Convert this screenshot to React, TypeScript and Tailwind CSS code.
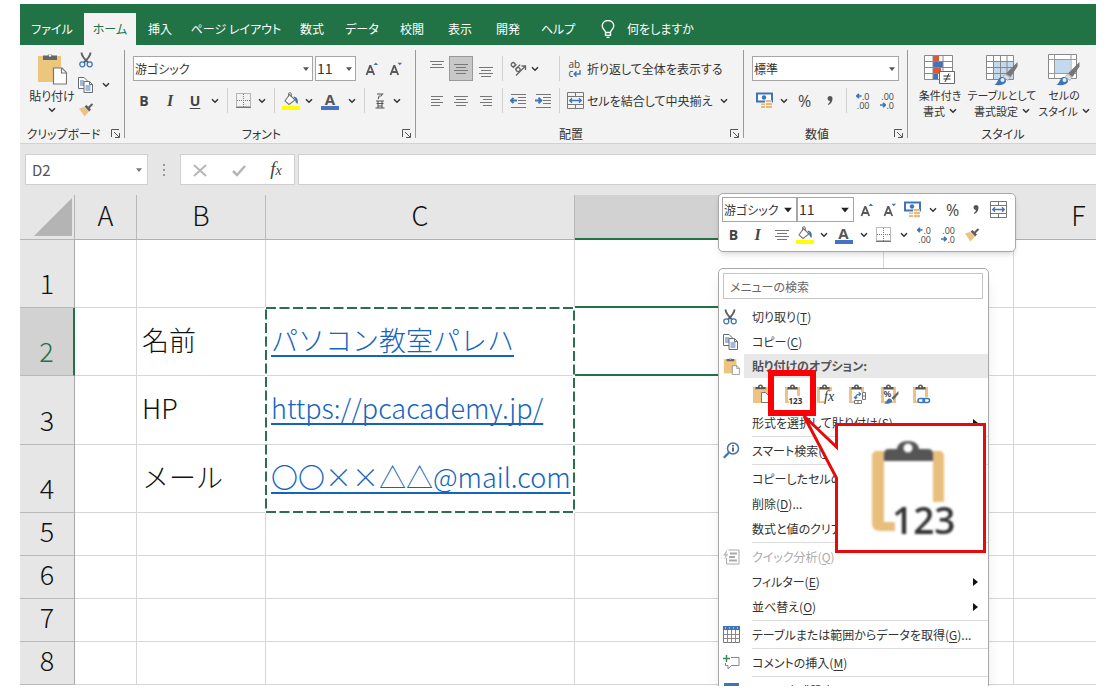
import type { ReactNode } from "react";
import clsx from "clsx";

/* ---------- icons ---------- */

function Chevron({ className }: { className?: string }) {
  return (
    <svg viewBox="0 0 8 6" className={clsx("h-1.5 w-2 shrink-0", className)} fill="none" stroke="#333" strokeWidth="1.5">
      <path d="M1 1.2 4 4.2 7 1.2" />
    </svg>
  );
}

function Triangle({ className }: { className?: string }) {
  return (
    <svg viewBox="0 0 8 5" className={clsx("pointer-events-none absolute top-1/2 -translate-y-1/2", className)}>
      <path d="M0 0h8L4 5z" fill="currentColor" />
    </svg>
  );
}

function ScissorsIcon() {
  return (
    <svg viewBox="0 0 14 16" className="h-4 w-3.5" fill="none">
      <path d="M2.5.5c0 3 1.800 5.500 6.500 10M11.500.5c0 3-1.800 5.500-6.500 10" stroke="#5f5f5f" strokeWidth="1.900" />
      <circle cx="3.300" cy="12.300" r="2.500" stroke="#3f74b5" strokeWidth="1.300" />
      <circle cx="10.700" cy="12.300" r="2.500" stroke="#3f74b5" strokeWidth="1.300" />
    </svg>
  );
}

function CopyIcon() {
  return (
    <svg viewBox="0 0 16 16" className="h-4 w-4" fill="#fff" stroke="#6a6a6a">
      <path d="M.5.5h5.500l3 3v8h-8.500z" />
      <path d="M2 4h4M2 6h5M2 8h5" stroke="#3f74b5" />
      <path d="M6 4.500h5.500l3 3v8H6z" />
      <path d="M11.500 4.500v3h3" fill="none" />
      <path d="M7.500 9h5M7.500 11h5M7.500 13h5" stroke="#3f74b5" />
    </svg>
  );
}

function BrushIcon() {
  return (
    <svg viewBox="0 0 16 15" className="h-[15px] w-4">
      <path d="M1 6.500 6 5l5 4.500-4.500 5z" fill="#ecc285" />
      <path d="m6.500 4.500 2-1.500L13 7.500l-1.800 2z" fill="#5c5c5c" />
      <path d="M10 5 13.800 1.200 15.200 2.600 11.500 6.500z" fill="#5c5c5c" />
    </svg>
  );
}

function PasteIcon({ className }: { className?: string }) {
  return (
    <svg viewBox="0 0 30 33" className={className}>
      <path d="M1 4h23v26H1z" fill="#ecc67d" />
      <path d="M6 8V3.500h4.500a3 3 0 0 1 5 0H20V8z" fill="#666" />
      <circle cx="13" cy="3.500" r="1.300" fill="#f3f3f3" />
      <path d="M16.500 16h8.500l4.500 4.500V32h-13z" fill="#fff" stroke="#777" strokeWidth="1.200" />
      <path d="M24.500 16v5h5" fill="none" stroke="#777" strokeWidth="1.200" />
    </svg>
  );
}

function FontSizeIcon({ up }: { up?: boolean }) {
  return (
    <svg viewBox="0 0 14 14" className="h-3.5 w-3.5" fill="none">
      <path d="M1.500 13 5 4h.6L9.200 13M2.800 10h5" stroke="#5a5a5a" strokeWidth="1.800" />
      <path d={up ? "M8.500 3h4.600L10.800.5z" : "M8.500.8h4.600l-2.300 2.500z"} fill="#3f74b5" />
    </svg>
  );
}

function BordersIcon() {
  return (
    <svg viewBox="0 0 15 15" className="h-[15px] w-[15px]" fill="none" stroke="#777">
      <path d="M.5.5h14v13H.5zM7.500 1v13M1 7.500h13" strokeDasharray="1 1" />
      <path d="M0 14.500h15" stroke="#777" />
    </svg>
  );
}

function FillIcon() {
  return (
    <svg viewBox="0 0 18 18" className="h-[18px] w-[18px]" fill="none">
      <path d="M7.500 2.500 13 8l-6 4.500L3 9z" fill="#fff" stroke="#777" strokeWidth="1.100" />
      <path d="M6.500 5V2a1.400 1.400 0 0 1 2.800 0v3" stroke="#777" />
      <path d="M11.500 4.500c4 .5 5 3.500 4 7.500-1.500-1-2.500-3-2.300-4.500z" fill="#3f74b5" />
      <path d="M0 14h18v4H0z" fill="#ffff00" />
    </svg>
  );
}

function FontColorIcon() {
  return (
    <span className="flex w-[18px] flex-col items-center">
      <span className="h-3.5 font-['Open_Sans',sans-serif] text-[15px] leading-[14px] font-bold text-[#555]">A</span>
      <span className="h-1 w-full bg-[#4472c4]" />
    </span>
  );
}

function PhoneticIcon() {
  return (
    <svg viewBox="0 0 14 16" className="h-4 w-3.5" fill="none" stroke="#555" strokeWidth="1.100">
      <path d="M4 1h5.500L7.500 3.500M6.500 2.500 5 6M3 8h8M5 8v2.500H3.500M9 8v2.500h1.500M5 10.500h4M5 13h4M5 10.500V15M9 10.500V15M2.500 15h9" />
    </svg>
  );
}

// Four text lines; `lines` holds [start, end] of every one
function LinesIcon({ lines, top = 0 }: { lines: number[][]; top?: number }) {
  return (
    <svg viewBox="0 0 16 18" className="h-[18px] w-4" stroke="#777">
      {lines.map(([from, to], i) => (
        <path key={i} d={`M${from} ${top + 0.5 + i * 3}H${to}`} />
      ))}
    </svg>
  );
}

function IndentIcon({ right }: { right?: boolean }) {
  return (
    <svg viewBox="0 0 16 16" className="h-4 w-4" fill="none" stroke="#777">
      <path d="M1 1.500h15M8 4.500h8M8 7.500h8M8 10.500h8M1 14.500h15" />
      <path
        d={right ? "M0 7.500h6M3.500 4.800l2.800 2.700-2.800 2.700" : "M7 7.500H1M3.500 4.800.8 7.500l2.700 2.700"}
        stroke="#3f74b5"
        strokeWidth="1.900"
      />
    </svg>
  );
}

function OrientationIcon() {
  return (
    <svg viewBox="0 0 17 17" className="h-[17px] w-[17px]" fill="none" stroke="#666" strokeWidth="1.300">
      <g transform="rotate(45 6 6)">
        <circle cx="3" cy="7" r="2" />
        <path d="M5.200 4.500v5M8 2v7" />
        <circle cx="10" cy="7" r="2" />
      </g>
      <path d="M6 15.500 15.500 6M11.500 6h4v4" />
    </svg>
  );
}

function WrapIcon() {
  return (
    <span className="flex w-[13px] flex-col font-['Open_Sans',sans-serif] text-[10px] leading-[9px] text-[#444]">
      <span className="text-left">ab</span>
      <span className="flex items-center">
        c
        <svg viewBox="0 0 8 7" className="h-[7px] w-2" fill="none" stroke="#3f74b5" strokeWidth="1.400">
          <path d="M7 0v4H1.500M3.500 1.500 1.200 4l2.300 2.500" />
        </svg>
      </span>
    </span>
  );
}

function MergeIcon() {
  return (
    <svg viewBox="0 0 17 17" className="h-[17px] w-[17px]" fill="none" stroke="#777">
      <path d="M.5.5h16v16H.5zM.5 4.500h16M.5 12.500h16M8.500.5v4M8.500 12.500v4" />
      <path d="M3 8.500h11M5 6.200 2.700 8.500 5 10.800M12 6.200l2.300 2.300L12 10.800" stroke="#3f74b5" strokeWidth="1.300" />
    </svg>
  );
}

function CurrencyIcon() {
  return (
    <svg viewBox="0 0 17 17" className="h-[17px] w-[17px]" fill="none">
      <path d="M1 1.500h15v8H1z" fill="#fff" stroke="#3f74b5" strokeWidth="2" />
      <circle cx="8" cy="5.500" r="2.200" fill="#3f74b5" />
      <path d="M9 8.500h7v8H9z" fill="#f3f3f3" />
      <path d="M10 8h6v2h-6zM10 11h6v2h-6zM10 14h6v2h-6zM5 14h4v2H5zM5 11.500h4v1.500H5z" fill="#ecb877" />
    </svg>
  );
}

function CommaIcon() {
  return (
    <svg viewBox="0 0 6 9" className="h-[9px] w-1.5">
      <path d="M3 0a2.500 2.500 0 0 1 2.500 2.500C5.500 5.500 4 8 1.200 9L.8 8.200C2 7.400 2.800 6.400 2.900 5A2.500 2.500 0 0 1 3 0z" fill="#555" />
    </svg>
  );
}

function DecimalArrow({ d }: { d: string }) {
  return (
    <svg viewBox="0 0 6 6" className="h-1.5 w-1.5" fill="none" stroke="#3f74b5" strokeWidth="1.700">
      <path d={d} />
    </svg>
  );
}

function DecimalIcon({ more }: { more?: boolean }) {
  return (
    <span className="flex w-[15px] flex-col font-['Open_Sans',sans-serif] text-[9px] leading-[9px] text-[#444]">
      <span className="flex items-center justify-end">
        {more && <DecimalArrow d="M5.500 3H1M3 .8.8 3 3 5.200" />}
        {more ? ".0" : ".00"}
      </span>
      <span className="flex items-center justify-end">
        {!more && <DecimalArrow d="M0 3h4.500M3 .8 5.200 3 3 5.200" />}
        {more ? ".00" : ".0"}
      </span>
    </span>
  );
}

function StyleBrush() {
  return (
    <>
      <path d="M31.500 7v4.500L24.500 22 20 18.500z" fill="#777" />
      <path d="m19.500 19 4.500 3.500-2 3-5-3.500z" fill="#ddd" stroke="#888" strokeWidth=".5" />
      <path d="M8 29.500c3.500-.5 3.500-5 6-7 2.500-1.500 6.500 1.200 6 4.200C18.500 30 13 31 8 29.500z" fill="#3f74b5" />
      <circle cx="16.500" cy="25" r="2" fill="#e9f0f8" />
    </>
  );
}

function ConditionalIcon() {
  return (
    <svg viewBox="0 0 32 30" className="h-[30px] w-8">
      <path d="M.5.5h28v24H.5z" fill="#fff" />
      <path d="M9 1h6v6H9zM9 13h8v6H9z" fill="#d9583b" />
      <path d="M9 7h10v6H9zM9 19h5v6H9z" fill="#3f74b5" />
      <path d="M.5.5h28v24H.5zM.5 6.500h28M.5 12.500h28M.5 18.500h28M9 .5v24M19 .5v24" fill="none" stroke="#888" />
      <path d="M15.500 16.500h15v12h-15z" fill="#fff" stroke="#666" />
      <path d="M19.500 21h7M19.500 24h7M25 18.500 21 27" stroke="#333" fill="none" />
    </svg>
  );
}

function TableFormatIcon() {
  return (
    <svg viewBox="0 0 32 30" className="h-[30px] w-8 overflow-visible">
      <path d="M.5.5h27v24H.5z" fill="#fff" />
      <path d="M7 6.500h20.500v18H7z" fill="#c4d8ee" />
      <path d="M.5.5h27v24H.5zM.5 6.500h27M.5 12.500h27M.5 18.500h27M7.500.5v24M14.500.5v24M21 .5v24" fill="none" stroke="#888" />
      <StyleBrush />
    </svg>
  );
}

function CellStyleIcon() {
  return (
    <svg viewBox="0 0 32 32" className="h-8 w-8">
      <path d="M.5.5h28v24H.5z" fill="#fff" stroke="#888" />
      <path d="M.5 5.500h28M.5 19.500h28M6.500.5v24M23 .5v24" stroke="#999" />
      <path d="M7 6h15.500v13H7z" fill="#c4d8ee" />
      <g transform="translate(0 1)">
        <StyleBrush />
      </g>
    </svg>
  );
}

/* ---------- ribbon parts ---------- */

function Tool({ label, className, children }: { label: string; className?: string; children: ReactNode }) {
  return (
    <button type="button" aria-label={label} className={clsx("flex h-[25px] shrink-0 items-center justify-center", className)}>
      {children}
    </button>
  );
}

function Separator({ className }: { className: string }) {
  return (
    <span className={clsx("flex h-[25px] justify-center", className)}>
      <span className="h-full w-px bg-[#d0d0d0]" />
    </span>
  );
}

function Launcher() {
  return (
    <svg viewBox="0 0 9 9" className="h-[9px] w-[9px]" fill="none" stroke="#555">
      <path d="M.5 8V.5H8M3 3l5 5M8.500 4v4.500H4" />
    </svg>
  );
}

function Group({ title, className, launcher = true, children }: { title: string; className: string; launcher?: boolean; children: ReactNode }) {
  return (
    <>
      <section aria-label={title} className={clsx("flex shrink-0 flex-col", className)}>
        {children}
        <div className="mt-auto flex h-[19px] items-center px-1">
          <span className={clsx("flex-1 text-center whitespace-nowrap", launcher && "pr-2")}>{title}</span>
          {launcher && (
            <button type="button" aria-label={`${title}の設定`}>
              <Launcher />
            </button>
          )}
        </div>
      </section>
      {launcher && <div className="my-[5px] w-px shrink-0 bg-[#999]" />}
    </>
  );
}

function Combo({ label, value, className, arrow }: { label: string; value: string; className: string; arrow: string }) {
  return (
    <span className={clsx("relative block shrink-0", className)}>
      <select
        aria-label={label}
        className="block h-[25px] w-full appearance-none rounded-none border border-[#a6a6a6] bg-white pl-px text-[#333] outline-none"
      >
        <option>{value}</option>
      </select>
      <Triangle className={arrow} />
    </span>
  );
}

const TABS = [
  { name: "ファイル", width: "w-16" },
  { name: "ホーム", width: "w-[52px]" },
  { name: "挿入", width: "w-12" },
  { name: "ページ レイアウト", width: "w-[104px]" },
  { name: "数式", width: "w-12" },
  { name: "データ", width: "w-[52px]" },
  { name: "校閲", width: "w-12" },
  { name: "表示", width: "w-12" },
  { name: "開発", width: "w-12" },
  { name: "ヘルプ", width: "w-[52px]" },
];

function TabBar() {
  return (
    <nav className="flex h-[41px] shrink-0 items-end overflow-hidden bg-[#217346] text-white">
      {TABS.map((tab) => (
        <button
          key={tab.name}
          type="button"
          className={clsx(
            "h-8 shrink-0 whitespace-nowrap",
            tab.width,
            tab.name === "ホーム" && "bg-[#f3f3f3] text-[#217346]"
          )}
        >
          {tab.name}
        </button>
      ))}
      <button type="button" className="flex h-8 items-center gap-3 pl-[17px] whitespace-nowrap">
        <svg viewBox="0 0 14 18" className="h-[18px] w-3.5" fill="none" stroke="#fff" strokeWidth="1.300">
          <path d="M4.500 12.500c0-2.500-3.300-3.300-3.300-6.700a5.800 5.300 0 0 1 11.600 0c0 3.400-3.300 4.200-3.300 6.700zM4.500 12.500v2.800h5v-2.800M5.500 17.300h3" />
        </svg>
        何をしますか
      </button>
    </nav>
  );
}

const LEFT = [[2, 14], [2, 11], [2, 14], [2, 11]];
const CENTER = [[1, 15], [3, 13], [1, 15], [3, 13]];
const RIGHT = [[2, 14], [5, 14], [2, 14], [5, 14]];

function Ribbon() {
  return (
    <div className="flex h-[99px] shrink-0 overflow-hidden border-b border-[#d2d2d2] bg-[#f3f3f3]">
      <Group title="クリップボード" className="w-[104px]">
        <div className="flex pt-0.5">
          <button type="button" className="flex w-[58px] flex-col items-center pt-[5px] pl-1.5">
            <PasteIcon className="h-[33px] w-[30px]" />
            <span className="leading-[22px] whitespace-nowrap">貼り付け</span>
            <Chevron />
          </button>
          <div className="flex flex-col">
            <Tool label="切り取り" className="w-4"><ScissorsIcon /></Tool>
            <span className="flex items-center gap-2">
              <Tool label="コピー" className="w-4"><CopyIcon /></Tool>
              <Chevron />
            </span>
            <Tool label="書式のコピー" className="w-4"><BrushIcon /></Tool>
          </div>
        </div>
      </Group>

      <Group title="フォント" className="w-[290px]">
        <div className="flex items-center pt-[11px] pl-2">
          <Combo label="フォント名" value="游ゴシック" className="w-[180px]" arrow="right-1 h-1 w-1.5 text-[#555]" />
          <Combo label="フォント サイズ" value="11" className="ml-0.5 w-[41px] text-[14px]" arrow="right-1 h-1 w-1.5 text-[#555]" />
          <Tool label="拡大" className="ml-1 w-6"><FontSizeIcon up /></Tool>
          <Tool label="縮小" className="w-6"><FontSizeIcon /></Tool>
        </div>
        <div className="flex items-center pt-[7px] pl-1.5 text-[14px] text-[#444]">
          <Tool label="太字" className="w-[26px] font-['Open_Sans',sans-serif] font-bold">B</Tool>
          <Tool label="斜体" className="w-[26px] font-['Liberation_Serif',serif] text-[16px] font-bold italic">I</Tool>
          <Tool label="下線" className="w-6 font-['Open_Sans',sans-serif] font-bold underline underline-offset-2">U</Tool>
          <Tool label="下線の種類" className="w-[15px]"><Chevron /></Tool>
          <Separator className="w-[11px]" />
          <Tool label="罫線" className="w-[21px]"><BordersIcon /></Tool>
          <Tool label="罫線の種類" className="w-[15px]"><Chevron /></Tool>
          <Separator className="w-[11px]" />
          <Tool label="塗りつぶしの色" className="w-[21px]"><FillIcon /></Tool>
          <Tool label="塗りつぶしの色の種類" className="w-[15px]"><Chevron /></Tool>
          <Tool label="フォントの色" className="w-7"><FontColorIcon /></Tool>
          <Tool label="フォントの色の種類" className="w-[15px]"><Chevron /></Tool>
          <Separator className="w-[11px]" />
          <Tool label="ふりがな" className="w-[19px]"><PhoneticIcon /></Tool>
          <Tool label="ふりがなの種類" className="w-[15px]"><Chevron /></Tool>
        </div>
      </Group>

      <Group title="配置" className="w-[327px]">
        <div className="flex items-center pt-[11px] pl-2">
          <Tool label="上揃え" className="w-[25px]"><LinesIcon lines={[[1, 15], [3, 13], [1, 15]]} top={1} /></Tool>
          <Tool label="上下中央揃え" className="w-6 border border-[#9a9a9a] bg-[#c8c8c8]"><LinesIcon lines={CENTER} top={4} /></Tool>
          <Tool label="下揃え" className="w-[25px]"><LinesIcon lines={[[1, 15], [3, 13], [1, 15], [3, 13]]} top={7} /></Tool>
          <Separator className="w-2" />
          <Tool label="方向" className="w-[49px] gap-1 pr-3"><OrientationIcon /><Chevron /></Tool>
          <Separator className="w-2" />
          <button type="button" className="flex items-center whitespace-nowrap">
            <span className="flex w-6 justify-center"><WrapIcon /></span>
            折り返して全体を表示する
          </button>
        </div>
        <div className="flex items-center pt-[7px] pl-2">
          <Tool label="左揃え" className="w-[25px]"><LinesIcon lines={LEFT} top={4} /></Tool>
          <Tool label="中央揃え" className="w-6"><LinesIcon lines={CENTER} top={4} /></Tool>
          <Tool label="右揃え" className="w-[25px]"><LinesIcon lines={RIGHT} top={4} /></Tool>
          <Separator className="w-2" />
          <Tool label="インデントを減らす" className="w-6"><IndentIcon /></Tool>
          <Tool label="インデントを増やす" className="w-[25px]"><IndentIcon right /></Tool>
          <Separator className="w-2" />
          <button type="button" className="flex items-center whitespace-nowrap">
            <span className="flex w-6 justify-center"><MergeIcon /></span>
            セルを結合して中央揃え
            <Chevron className="ml-2" />
          </button>
        </div>
      </Group>

      <Group title="数値" className="w-[163px]">
        <div className="pt-[11px] pl-2">
          <Combo label="表示形式" value="標準" className="w-[147px]" arrow="right-1 h-1 w-1.5 text-[#555]" />
        </div>
        <div className="flex items-center pt-[7px] pl-2 text-[#444]">
          <Tool label="通貨" className="w-6"><CurrencyIcon /></Tool>
          <Tool label="通貨の種類" className="w-[15px]"><Chevron /></Tool>
          <Tool label="パーセント" className="w-[27px] font-['Open_Sans',sans-serif] text-[16px]">%</Tool>
          <Tool label="桁区切り" className="w-6"><CommaIcon /></Tool>
          <Separator className="w-2" />
          <Tool label="小数点以下を増やす" className="w-6"><DecimalIcon more /></Tool>
          <Tool label="小数点以下を減らす" className="w-[25px]"><DecimalIcon /></Tool>
        </div>
      </Group>

      <Group title="スタイル" className="w-[190px]" launcher={false}>
        <div className="flex pt-2 pl-1 text-center text-[11px] leading-4 whitespace-nowrap">
          <StyleButton icon={<ConditionalIcon />} lines={["条件付き", "書式"]} className="w-14" />
          <StyleButton icon={<TableFormatIcon />} lines={["テーブルとして", "書式設定"]} className="w-[68px]" />
          <StyleButton icon={<CellStyleIcon />} lines={["セルの", "スタイル"]} className="w-14" />
        </div>
      </Group>
    </div>
  );
}

function StyleButton({ icon, lines, className }: { icon: ReactNode; lines: string[]; className: string }) {
  return (
    <button type="button" className={clsx("flex flex-col items-center", className)}>
      <span className="flex h-[34px] items-center">{icon}</span>
      <span>{lines[0]}</span>
      <span className="flex items-center gap-1">
        {lines[1]}
        <Chevron />
      </span>
    </button>
  );
}

function FormulaBar() {
  return (
    <div className="flex h-[51px] shrink-0 bg-[#e6e6e6] pt-2.5 pl-[5px] text-[#555]">
      <span className="relative h-[31px] w-[123px] shrink-0">
        <input
          aria-label="名前ボックス"
          defaultValue="D2"
          className="h-full w-full border border-[#cfcfcf] bg-white pl-1.5 text-[15px] outline-none"
        />
        <Triangle className="right-1.5 h-1 w-1.5 text-[#777]" />
      </span>
      <span className="flex h-[31px] w-8 shrink-0 flex-col items-center justify-center gap-[3px]">
        <span className="h-0.5 w-0.5 bg-[#999]" />
        <span className="h-0.5 w-0.5 bg-[#999]" />
        <span className="h-0.5 w-0.5 bg-[#999]" />
      </span>
      <div className="flex h-[31px] w-[115px] shrink-0 items-center justify-around border border-[#cfcfcf] bg-white">
        <button type="button" aria-label="キャンセル">
          <svg viewBox="0 0 14 14" className="h-3.5 w-3.5" stroke="#b5b5b5" strokeWidth="1.800" fill="none">
            <path d="M1 2l12 11M13 2 1 13" />
          </svg>
        </button>
        <button type="button" aria-label="入力">
          <svg viewBox="0 0 14 14" className="h-3.5 w-3.5" stroke="#b5b5b5" strokeWidth="2.500" fill="none">
            <path d="M1 8l4 4 8-9" />
          </svg>
        </button>
        <button type="button" aria-label="関数の挿入" className="font-['Liberation_Serif',serif] text-[19px] leading-5 text-[#444] italic">
          f<span className="text-[14px]">x</span>
        </button>
      </div>
      <input aria-label="数式バー" className="ml-[3px] h-[31px] min-w-0 flex-1 border border-r-0 border-[#cfcfcf] bg-white px-2 outline-none" />
    </div>
  );
}

/* ---------- sheet ---------- */

const COLUMNS = [
  { name: "A", width: "w-[62px]" },
  { name: "B", width: "w-[129px]" },
  { name: "C", width: "w-[309px]" },
  { name: "D", width: "w-[309px]" },
  { name: "E", width: "w-[130px]" },
  { name: "F", width: "w-[130px]" },
];

const ROWS: { label?: string; link?: string; height: string }[] = [
  { height: "h-[68px]" },
  { label: "名前", link: "パソコン教室パレハ", height: "h-[68px]" },
  { label: "HP", link: "https://pcacademy.jp/", height: "h-[69px]" },
  { label: "メール", link: "〇〇××△△@mail.com", height: "h-[68px]" },
  { height: "h-[43px]" },
  { height: "h-[43px]" },
  { height: "h-[43px]" },
  { height: "h-[43px]" },
];

function Sheet() {
  return (
    <table className="w-[1124px] table-fixed border-separate border-spacing-0 text-[27px] leading-8 font-light text-[#111]">
      <colgroup>
        <col className="w-[55px]" />
        {COLUMNS.map((col) => (
          <col key={col.name} className={col.width} />
        ))}
      </colgroup>
      <thead>
        <tr className="h-[45px] bg-[#e6e6e6]">
          <th className="border-r border-b border-[#b5b5b5] p-0">
            <svg viewBox="0 0 38 38" className="mr-0.5 ml-auto h-[38px] w-[38px]">
              <path d="M38 0v38H0z" fill="#b4b4b4" />
            </svg>
          </th>
          {COLUMNS.map((col) => (
            <th
              key={col.name}
              scope="col"
              className={clsx(
                "border-r border-r-[#b9b9b9] p-0 pb-1 font-light",
                col.name === "D" ? "border-b-2 border-b-[#217346] bg-[#d2d2d2]" : "border-b border-b-[#b0b0b0]"
              )}
            >
              {col.name !== "D" && col.name !== "E" && col.name}
            </th>
          ))}
        </tr>
      </thead>
      <tbody>
        {ROWS.map((row, r) => (
          <tr key={r} className={row.height}>
            <th
              scope="row"
              className={clsx(
                "border-b border-b-[#b9b9b9] p-0 pb-2 align-bottom font-light",
                r === 1
                  ? "border-r-2 border-r-[#217346] bg-[#d2d2d2] text-[#217346]"
                  : "border-r border-r-[#a8a8a8] bg-[#e6e6e6]"
              )}
            >
              {r + 1}
            </th>
            {COLUMNS.map((col) => (
              <td
                key={col.name}
                className={clsx(
                  "border-r border-b border-[#d6d6d6] p-0 pb-1 pl-[5px] whitespace-nowrap",
                  r === 1 && (col.name === "C" || col.name === "D") && "relative"
                )}
              >
                {col.name === "B" && row.label}
                {col.name === "C" && row.link && (
                  <a
                    href="#"
                    className="text-[#1565c0] underline decoration-2 underline-offset-4 [text-decoration-skip-ink:none]"
                  >
                    {row.link}
                  </a>
                )}
                {col.name === "C" && r === 1 && <CopyMarquee />}
                {col.name === "D" && r === 1 && (
                  <span className="absolute -top-0.5 right-0 -bottom-px left-0 border-y-2 border-[#217346]" />
                )}
              </td>
            ))}
          </tr>
        ))}
      </tbody>
    </table>
  );
}

// Dashed frame round the copied range C2:C4
function CopyMarquee() {
  return (
    <svg viewBox="0 0 312 208" className="pointer-events-none absolute -top-0.5 -left-0.5 z-10 h-[208px] w-[312px]" fill="none">
      <rect x="2" y="2" width="308" height="204" stroke="#fff" strokeWidth="2" />
      <rect x="2" y="2" width="308" height="204" stroke="#2d6e4b" strokeWidth="2" strokeDasharray="10 3.500" />
    </svg>
  );
}

/* ---------- floating toolbar ---------- */

function MiniToolbar() {
  return (
    <div className="absolute top-[189px] left-[698px] z-20 w-[298px] rounded-[5px] border border-[#a8a8a8] bg-white px-[3px] pt-[3px] pb-1 text-[#444] shadow-md">
      <div className="flex items-center">
        <Combo label="フォント名" value="游ゴシック" className="w-[75px]" arrow="right-[5px] h-[5px] w-2 text-[#222]" />
        <Combo label="フォント サイズ" value="11" className="w-[57px] text-[14px]" arrow="right-[5px] h-[5px] w-2 text-[#222]" />
        <Tool label="拡大" className="w-[25px]"><FontSizeIcon up /></Tool>
        <Tool label="縮小" className="w-[21px]"><FontSizeIcon /></Tool>
        <Tool label="通貨" className="w-[25px]"><CurrencyIcon /></Tool>
        <Tool label="通貨の種類" className="w-[15px]"><Chevron /></Tool>
        <Tool label="パーセント" className="w-[25px] font-['Open_Sans',sans-serif] text-[16px]">%</Tool>
        <Tool label="桁区切り" className="w-[21px]"><CommaIcon /></Tool>
        <Tool label="セルを結合" className="w-[25px]"><MergeIcon /></Tool>
      </div>
      <div className="flex items-center text-[14px]">
        <Tool label="太字" className="w-[23px] font-['Open_Sans',sans-serif] font-bold">B</Tool>
        <Tool label="斜体" className="w-[25px] font-['Liberation_Serif',serif] text-[16px] font-bold italic">I</Tool>
        <Tool label="中央揃え" className="w-[23px]"><LinesIcon lines={CENTER} top={4} /></Tool>
        <Tool label="塗りつぶしの色" className="w-[23px]"><FillIcon /></Tool>
        <Tool label="塗りつぶしの色の種類" className="w-[15px]"><Chevron /></Tool>
        <Tool label="フォントの色" className="w-[25px]"><FontColorIcon /></Tool>
        <Tool label="フォントの色の種類" className="w-[15px]"><Chevron /></Tool>
        <Tool label="罫線" className="w-[25px]"><BordersIcon /></Tool>
        <Tool label="罫線の種類" className="w-[15px]"><Chevron /></Tool>
        <Tool label="小数点以下を増やす" className="w-[25px]"><DecimalIcon more /></Tool>
        <Tool label="小数点以下を減らす" className="w-[23px]"><DecimalIcon /></Tool>
        <Tool label="書式のコピー" className="w-[25px]"><BrushIcon /></Tool>
      </div>
    </div>
  );
}

/* ---------- context menu ---------- */

function MenuItem({ text, accel, tail, icon, arrow, disabled }: { text: string; accel: string; tail?: string; icon?: ReactNode; arrow?: boolean; disabled?: boolean }) {
  return (
    <button
      type="button"
      disabled={disabled}
      className={clsx("flex h-[25px] w-full items-center whitespace-nowrap", disabled ? "text-[#aaa]" : "text-[#333]")}
    >
      <span className="flex w-[33px] items-center pl-1">{icon}</span>
      <span>
        {text}(<u className="underline-offset-2">{accel}</u>){tail}
      </span>
      {arrow && (
        <svg viewBox="0 0 5 8" className="mr-2.5 ml-auto h-2 w-[5px]">
          <path d="M0 0v8l5-4z" fill="#111" />
        </svg>
      )}
    </button>
  );
}

function MenuLine() {
  return (
    <div className="flex h-[3px] items-center pl-[33px]">
      <div className="h-px flex-1 bg-[#dcdcdc]" />
    </div>
  );
}

function ClipboardBase() {
  return (
    <>
      <path d="M1 3h15v16H1z" fill="#ecc285" />
      <path d="M4 5h9v12H4z" fill="#fff" />
      <path d="M3.500 5.500V3H6a2.500 2.500 0 0 1 5 0h2.500v2.500z" fill="#555" />
      <circle cx="8.500" cy="2.600" r=".9" fill="#fff" />
    </>
  );
}

function PasteOption({ label, className, children }: { label: string; className?: string; children: ReactNode }) {
  return (
    <button type="button" aria-label={label} className={clsx("h-5 w-[18px] shrink-0", className)}>
      <svg viewBox="0 0 18 20" className="h-5 w-[18px] overflow-visible">
        <ClipboardBase />
        {children}
      </svg>
    </button>
  );
}

function PasteOptions() {
  return (
    <div className="flex h-8 items-center gap-[14px] pl-[33px]">
      <PasteOption label="貼り付け">
        <path d="M4 5.500h9v12H4z" fill="#ecc285" />
        <path d="M9.500 8.500h4l3 3v7h-7z" fill="#fff" stroke="#777" />
      </PasteOption>
      <PasteOption label="値">
        <path d="M5 12h14v8H5z" fill="#fff" />
        <text x="4.500" y="19.500" fontSize="8" fontWeight="700" fontFamily="Open Sans" fill="#333">123</text>
      </PasteOption>
      <PasteOption label="数式">
        <path d="M8 7h9v12H8z" fill="#fff" />
        <text x="8" y="17" fontSize="14" fontStyle="italic" fontFamily="Liberation Serif" fill="#333">fx</text>
      </PasteOption>
      <PasteOption label="行/列の入れ替え">
        <path d="M6 8h12v12H6z" fill="#fff" />
        <path d="M14.500 8.500h3v7h-3zM14.500 12h3M6.500 16.500h7v3h-7zM10 16.500v3" fill="#fff" stroke="#777" />
        <path d="M7.500 14.500c0-3 1.500-4.500 4.500-4.500M6 12.800l1.600 1.900 1.700-1.900M10.800 8.200 12.600 10l-1.800 1.700" fill="none" stroke="#3f74b5" strokeWidth="1.200" />
      </PasteOption>
      <PasteOption label="書式設定">
        <text x="3.500" y="13" fontSize="9" fontWeight="600" fontFamily="Open Sans" fill="#333">%</text>
        <path d="m18.500 7-7 7 2 2 5-6z" fill="#666" />
        <path d="M4 19.500c2-.5 2.500-4 5-5 2 0 3.500 1.500 3 3.200-1.500 2-5 2.300-8 1.800z" fill="#3f74b5" />
      </PasteOption>
      <PasteOption label="リンク貼り付け">
        <path d="M6 13h12v7H6z" fill="#fff" />
        <rect x="6" y="14.500" width="6.500" height="4" rx="2" fill="none" stroke="#3f74b5" strokeWidth="1.500" />
        <rect x="11" y="14.500" width="6.500" height="4" rx="2" fill="none" stroke="#3f74b5" strokeWidth="1.500" />
      </PasteOption>
    </div>
  );
}

function SmartLookupIcon() {
  return (
    <svg viewBox="0 0 17 17" className="h-[17px] w-[17px]" fill="none" stroke="#3f74b5">
      <circle cx="10" cy="6.500" r="5.500" strokeWidth="1.500" />
      <path d="M6 10.500.8 15.800" strokeWidth="2.300" />
      <path d="M10 5.500v4M10 3v1.500" stroke="#333" strokeWidth="1.500" />
    </svg>
  );
}

function QuickAnalysisIcon() {
  return (
    <svg viewBox="0 0 17 16" className="h-4 w-[17px]" fill="none" stroke="#aaa">
      <path d="M5.500 1h10.500v14H3.500V9" />
      <path d="M7 4.500h7M6 8h6M6 11.500h8" strokeWidth="2" />
      <path d="M4.500 0 0 6.500h2.500L1 11l4.500-6H3.300z" fill="#bbb" stroke="none" />
    </svg>
  );
}

function TableIcon() {
  return (
    <svg viewBox="0 0 17 17" className="h-[17px] w-[17px]">
      <path d="M.5.5h16v16H.5z" fill="#fff" stroke="#777" />
      <path d="M.5 8.500h16M.5 12.500h16M4.500 3v14M8.500 3v14M12.500 3v14" stroke="#888" />
      <path d="M0 0h17v4H0z" fill="#3f74b5" />
      <path d="M2 2h1M6 2h1M10 2h1M14 2h1" stroke="#fff" />
    </svg>
  );
}

function CommentIcon() {
  return (
    <svg viewBox="0 0 17 15" className="h-[15px] w-[17px]" fill="none">
      <path d="M8 2.500h8v8H8.500L5 14v-3.500H2.500V8" stroke="#888" />
      <path d="M3.500 0v7M0 3.500h7" stroke="#3a8a62" strokeWidth="1.500" />
    </svg>
  );
}

function FormatCellsIcon() {
  return (
    <svg viewBox="0 0 15 16" className="ml-px h-4 w-[15px]">
      <path d="M.5.5h14v15H.5z" fill="#fff" stroke="#777" />
      <path d="M0 0h15v4H0z" fill="#3f74b5" />
    </svg>
  );
}

function ContextMenu() {
  return (
    <div className="absolute top-[264px] left-[698px] z-20 w-[271px] rounded-[5px] border border-[#a8a8a8] bg-white pt-1 pb-2 shadow-lg">
      <input
        aria-label="メニューの検索"
        placeholder="メニューの検索"
        className="mb-[5px] ml-1 block h-[26px] w-[260px] border border-[#c4c4c4] bg-white pl-1.5 placeholder-[#666] outline-none"
      />
      <MenuItem text="切り取り" accel="T" icon={<ScissorsIcon />} />
      <MenuItem text="コピー" accel="C" icon={<CopyIcon />} />
      <div className="flex h-6 items-center">
        <span className="w-[25px] pl-1"><PasteIcon className="h-[18px] w-[17px]" /></span>
        <span className="h-full flex-1 bg-[#e8e8e8] pl-2 leading-6 font-bold text-[#555]">貼り付けのオプション:</span>
      </div>
      <PasteOptions />
      <MenuItem text="形式を選択して貼り付け" accel="S" arrow />
      <MenuLine />
      <MenuItem text="スマート検索" accel="L" icon={<SmartLookupIcon />} />
      <MenuLine />
      <MenuItem text="コピーしたセルの挿入" accel="E" tail="..." />
      <MenuItem text="削除" accel="D" tail="..." />
      <MenuItem text="数式と値のクリア" accel="N" />
      <MenuLine />
      <MenuItem text="クイック分析" accel="Q" icon={<QuickAnalysisIcon />} disabled />
      <MenuItem text="フィルター" accel="E" arrow />
      <MenuItem text="並べ替え" accel="O" arrow />
      <MenuLine />
      <MenuItem text="テーブルまたは範囲からデータを取得" accel="G" tail="..." icon={<TableIcon />} />
      <MenuLine />
      <MenuItem text="コメントの挿入" accel="M" icon={<CommentIcon />} />
      <MenuLine />
      <MenuItem text="セルの書式設定" accel="F" tail="..." icon={<FormatCellsIcon />} />
      <Callout />
    </div>
  );
}

// Red frame on the "values" button and its enlarged view
function Callout() {
  return (
    <svg viewBox="0 0 220 186" className="pointer-events-none absolute top-[101px] left-[49px] h-[186px] w-[220px]" fill="none">
      <rect x="3" y="3" width="42" height="40" stroke="#fb0007" strokeWidth="6" />
      <path d="M36 46 68.500 77V54.500h148v127h-148V108z" fill="#fff" stroke="#e60a0a" strokeWidth="3" />
      <g className="blur-[1px]">
        <path d="M107 81h9v71h11v9h-15q-8 0-8-8V84zM165 81h8l3 3v48h-11z" fill="#e8be7c" />
        <path d="M116 91v-7q0-5 5-5h8q1-8 11-8t11 8h9q5 0 5 5v7z" fill="#555" />
        <circle cx="140" cy="78" r="4.500" fill="#fff" />
        <text x="124" y="164" fontSize="37" fontWeight="600" fontFamily="Open Sans" fill="#333">123</text>
      </g>
    </svg>
  );
}

export default function App() {
  return (
    <div className="flex h-screen flex-col bg-white pt-1 pr-[22px] pb-[7px] pl-5 font-['Noto_Sans_CJK_JP',sans-serif] text-[12px] text-[#333]">
      <div className="relative flex min-h-0 flex-1 flex-col overflow-hidden [font-feature-settings:'palt']">
        <TabBar />
        <Ribbon />
        <FormulaBar />
        <main className="min-h-0 flex-1 overflow-hidden [font-feature-settings:normal]">
          <Sheet />
        </main>
        <MiniToolbar />
        <ContextMenu />
      </div>
    </div>
  );
}
